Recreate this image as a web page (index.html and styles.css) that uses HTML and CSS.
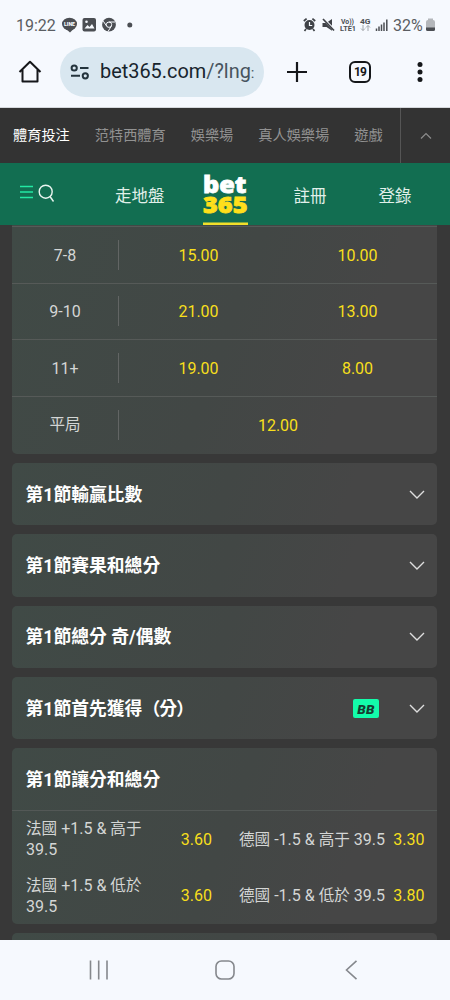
FILE: index.html
```html
<!DOCTYPE html>
<html lang="zh-Hant">
<head>
<meta charset="utf-8">
<meta name="viewport" content="width=device-width">
<title>bet365</title>
<link rel="stylesheet" href="styles.css">
</head>
<body>
<div class="status">
  <span class="clock">19:22</span>
  <svg class="status-left" width="76" height="20" viewBox="0 0 76 20">
    <g fill="#4b4e53">
      <ellipse cx="7.500" cy="9" rx="7.500" ry="6.300"/><path d="M4 14l4 3.500 4-4z"/>
      <rect x="20.500" y="3" width="13.500" height="13.500" rx="2"/>
      <circle cx="47" cy="9.700" r="6.900"/>
      <circle cx="67.800" cy="10" r="2.500"/>
    </g>
    <text x="2" y="11" class="line-text" textLength="11" lengthAdjust="spacingAndGlyphs">LINE</text>
    <path d="M22.500 13.500l3-3.500 2 2 2.500-3 2.500 4.500z" fill="#f6f9fe"/><circle cx="24.500" cy="6.700" r="1.300" fill="#f6f9fe"/>
    <circle cx="47" cy="9.700" r="2.700" fill="none" stroke="#f6f9fe"/>
    <path d="M47 7h6M44.700 11.200l-3.400-5M49.300 11.200L46 16.500" stroke="#f6f9fe" fill="none"/>
  </svg>
  <svg class="status-right" width="86" height="20" viewBox="0 0 86 20">
    <circle cx="6.500" cy="10" r="5" fill="#3f4247"/><path d="M6.500 7v3.500h2.700" stroke="#f6f9fe" stroke-width="1.200" fill="none"/>
    <g fill="none" stroke="#3f4247">
      <path d="M.8 6l2.800-2.400M9.400 3.600L12.200 6M3 14l-1.500 2M10 14l1.500 2" stroke-width="1.700"/>
      <path d="M20 4l11 11.500" stroke-width="1.700"/>
    </g>
    <path d="M19.500 8h3.200l6.300 6.500v1.200L23.500 12h-4zM25 6.800L29 4v6.800z" fill="#3f4247"/>
    <text x="38" y="8.500" class="net" textLength="13" lengthAdjust="spacingAndGlyphs">Vo))</text>
    <text x="37" y="16" class="net" textLength="16" lengthAdjust="spacingAndGlyphs">LTE1</text>
    <text x="57" y="8.500" class="net" textLength="10.500" lengthAdjust="spacingAndGlyphs">4G</text>
    <path d="M60 10v5.500M58 13.500l2 2 2-2M65 16v-5.500M63 12.500l2-2 2 2" fill="none" stroke="#a2a6ab"/>
    <path d="M73.500 16v-2.500M76 16v-4.500M78.500 16V9.500M81 16V7.500M83.800 16V4.500" stroke="#4b4e53" stroke-width="1.500" fill="none"/>
  </svg>
  <span class="percent">32%</span>
  <svg class="battery" width="9" height="14" viewBox="0 0 9 14"><path d="M0 4q0-2 2-2V.5h5V2q2 0 2 2v6H0z" fill="#b4b7bb"/><path d="M0 9.500h9v2q0 1.500-1.500 1.500h-6Q0 13 0 11.500z" fill="#4b4e53"/></svg>
</div>
<div class="browser">
  <svg class="home" width="24" height="24" viewBox="0 0 24 24"><path d="M1.500 12L12 1.700 22.500 12M4.500 9.500V21.600h15V9.500" fill="none" stroke="#15171a" stroke-width="2" stroke-linejoin="round"/></svg>
  <div class="address">
    <svg width="20" height="16" viewBox="0 0 20 16"><g fill="none" stroke="#24343d" stroke-width="2"><circle cx="4.200" cy="4" r="2.600"/><path d="M10 4h8.500M1 11.800h9"/><circle cx="15.300" cy="11.800" r="2.600"/></g></svg>
    <div class="url"><span class="host">bet365.com</span>/?lng<span class="cut">:</span></div>
  </div>
  <svg class="plus" width="22" height="22" viewBox="0 0 22 22"><path d="M11 1v20M1 11h20" stroke="#15171a" stroke-width="2.200"/></svg>
  <div class="tabs">19</div>
  <svg class="dots" width="6" height="22" viewBox="0 0 6 22"><g fill="#15171a"><circle cx="3" cy="3.500" r="2.500"/><circle cx="3" cy="11" r="2.500"/><circle cx="3" cy="18.500" r="2.500"/></g></svg>
</div>
<nav class="products">
  <span class="active">體育投注</span><span>范特西體育</span><span>娛樂場</span><span>真人娛樂場</span><span>遊戲</span>
  <div class="collapse"><svg width="12" height="8" viewBox="0 0 12 8"><path d="M1 6.500l5-5 5 5" fill="none" stroke="#8c8c8c" stroke-width="1.200"/></svg></div>
</nav>
<header class="header">
  <svg class="menu" width="36" height="22" viewBox="0 0 36 22"><path d="M0 5.500h13M0 11h13M0 16.500h13" stroke="#23e8a3" stroke-width="1.500"/><circle cx="25.700" cy="10.700" r="6.500" fill="none" stroke="#eaf5f0" stroke-width="1.400"/><path d="M30 15.500l3.500 5" stroke="#eaf5f0" stroke-width="1.400"/></svg>
  <span class="live">走地盤</span>
  <svg class="logo" width="46" height="62" viewBox="0 0 46 62">
    <text x="0" y="30" fill="#fff" stroke="#fff" textLength="43.500" lengthAdjust="spacingAndGlyphs">bet</text>
    <text x="0" y="49.700" fill="#ffdf1b" stroke="#ffdf1b" textLength="44.500" lengthAdjust="spacingAndGlyphs">365</text>
    <rect x="0" y="59.500" width="45" height="2.500" fill="#f2df2a"/>
  </svg>
  <span class="join">註冊</span>
  <span class="login">登錄</span>
</header>
<main class="content">
  <section class="card margins">
    <div class="row"><div class="label">7-8</div><div class="odds">15.00</div><div class="odds">10.00</div></div>
    <div class="row"><div class="label">9-10</div><div class="odds">21.00</div><div class="odds">13.00</div></div>
    <div class="row"><div class="label">11+</div><div class="odds">19.00</div><div class="odds">8.00</div></div>
    <div class="row"><div class="label cjk">平局</div><div class="odds">12.00</div></div>
  </section>
  <section class="card market"><h2>第1節輸贏比數</h2><svg class="chev" width="16" height="10" viewBox="0 0 16 10"><path d="M1 1l7 7 7-7"/></svg></section>
  <section class="card market"><h2>第1節賽果和總分</h2><svg class="chev" width="16" height="10" viewBox="0 0 16 10"><path d="M1 1l7 7 7-7"/></svg></section>
  <section class="card market"><h2>第1節總分 奇/偶數</h2><svg class="chev" width="16" height="10" viewBox="0 0 16 10"><path d="M1 1l7 7 7-7"/></svg></section>
  <section class="card market"><h2>第1節首先獲得<span class="paren">（分）</span></h2><span class="bb">BB</span><svg class="chev" width="16" height="10" viewBox="0 0 16 10"><path d="M1 1l7 7 7-7"/></svg></section>
  <section class="card open">
    <div class="market"><h2>第1節讓分和總分</h2></div>
    <div class="pair"><div class="pick"><span class="name"><b>法國</b> +1.5 &amp; <b>高于</b><br>39.5</span><span class="price">3.60</span></div><div class="pick"><span class="name"><b>德國</b> -1.5 &amp; <b>高于</b> 39.5</span><span class="price">3.30</span></div></div>
    <div class="pair"><div class="pick"><span class="name"><b>法國</b> +1.5 &amp; <b>低於</b><br>39.5</span><span class="price">3.60</span></div><div class="pick"><span class="name"><b>德國</b> -1.5 &amp; <b>低於</b> 39.5</span><span class="price">3.80</span></div></div>
  </section>
  <section class="card market"></section>
</main>
<footer class="android">
  <svg width="20" height="20" viewBox="0 0 20 20"><path d="M1.500 .5v19M9.700 .5v19M18 .5v19"/></svg>
  <svg width="20" height="20" viewBox="0 0 20 20"><rect x="1" y="1" width="18" height="18" rx="5.500"/></svg>
  <svg width="20" height="20" viewBox="0 0 20 20"><path d="M15.500 .8L5.500 10l10 9.200"/></svg>
</footer>
</body>
</html>
```
FILE: styles.css
```css
* { box-sizing: border-box; }
body {
  margin: 0; width: 450px; height: 1000px; overflow: hidden;
  display: flex; flex-direction: column;
  background: #383838;
  font-family: Roboto, "Noto Sans CJK TC", sans-serif;
  font-size: 16px; white-space: nowrap;
}
svg { display: block; flex: none; }

.status { height: 47px; flex: none; display: flex; align-items: center; padding: 3px 15px 0 16px; background: #f6f9fe; color: #5a5d62; }
.clock { width: 46px; font-size: 16px; }
.status-right { margin-left: 165px; }
.percent { margin-left: 4px; width: 33px; font-size: 16px; }
.line-text { font: 900 5px Roboto, sans-serif; fill: #f6f9fe; }
.net { font: 700 7.500px Roboto, sans-serif; fill: #4b4e53; }

.browser { height: 61px; flex: none; display: flex; align-items: center; padding: 0 27px 11px 18px; background: #f6f9fe; border-bottom: 1px solid #d5d8dc; }
.address { width: 205px; height: 50px; margin-left: 18px; padding-left: 10px; border-radius: 25px; display: flex; align-items: center; background: #d9e7f0; }
.url { width: 156px; margin-left: 10px; padding-top: 2px; overflow: hidden; font-size: 19.900px; line-height: 30px; color: #47545e; }
.host { color: #17242d; }
.cut { font-size: 15px; }
.plus { margin-left: 22px; }
.tabs { width: 22px; height: 22px; margin-left: 41px; border: 2px solid #15171a; border-radius: 6px; font-size: 12px; font-weight: 700; line-height: 18px; text-align: center; letter-spacing: -.8px; color: #15171a; }
.dots { margin-left: 46px; }

.products { height: 55px; flex: none; display: flex; align-items: center; background: #333; color: #929292; font-size: 14.200px; padding-left: 13px; }
.products span { margin-right: 25px; padding-bottom: 3px; }
.products .active { color: #fff; }
.products span:nth-child(5) { margin-right: 0; }
.collapse { margin-left: auto; width: 50px; height: 55px; border-left: 1px solid #555; display: flex; align-items: center; justify-content: center; }

.header { height: 62px; flex: none; display: flex; align-items: center; padding-left: 20px; background: #126e51; color: #e1f0ea; font-size: 16.500px; }
.menu { margin-bottom: 4px; }
.live { margin-left: 59px; width: 88px; padding-top: 1px; }
.logo text { font: 900 23px "Noto Sans", sans-serif; stroke-width: .8; }
.join { margin-left: 44.500px; width: 85px; padding-top: 1px; }
.login { padding-top: 1px; }

.content { height: 715px; flex: none; overflow: hidden; padding: 0 13px 0 12px; display: flex; flex-direction: column; gap: 9px; }
.card { flex: none; border-radius: 5px; background: linear-gradient(110deg, #404a46 0%, #424745 50%, #464646 78%); }
.margins { height: 229px; padding-top: 1px; border-radius: 0 0 5px 5px; }
.row { height: 57px; display: flex; align-items: center; border-top: 1px solid #565a58; }
.row:nth-child(-n+2) { height: 56.500px; }
.label { width: 107px; height: 30px; line-height: 31px; text-align: center; border-right: 1px solid #626564; color: #d4d6d5; }
.cjk { font-size: 15.500px; }
.odds { flex: 1; padding-top: 1px; text-align: center; color: #f7df1c; }

.market { height: 62.300px; display: flex; align-items: center; padding: 0 12px 0 13.500px; }
h2 { margin: 0 auto 0 0; padding-bottom: 3px; color: #fff; font-size: 17.800px; font-weight: 700; }
.paren { margin-right: -10px; letter-spacing: -.9px; }
.chev { margin-top: 1px; }
.chev path { fill: none; stroke: #dedede; stroke-width: 1.400; }
.bb { width: 26px; height: 19px; margin-right: 30px; border-radius: 2px; background: #13fcaa; color: #163d31; font: italic 900 13.500px/20px Roboto, sans-serif; text-align: center; letter-spacing: .3px; }

.open { height: 176px; }
.open .market { height: 63px; border-bottom: 1px solid #535856; }
.pair { height: 56.500px; display: flex; color: #d4d6d5; line-height: 21px; }
.pick { width: 212.500px; padding: 0 12.500px 0 14px; display: flex; align-items: center; justify-content: space-between; }
.name b { font-weight: 400; font-size: 15.600px; line-height: 20px; }
.pick:nth-child(2) .name { margin-left: .5px; }
.price { color: #f7df1c; }

.android { height: 60px; flex: none; display: flex; align-items: center; justify-content: space-between; padding: 0 89px; background: #f6f9fe; }
.android svg { fill: none; stroke: #85888d; stroke-width: 1.600; }
```
